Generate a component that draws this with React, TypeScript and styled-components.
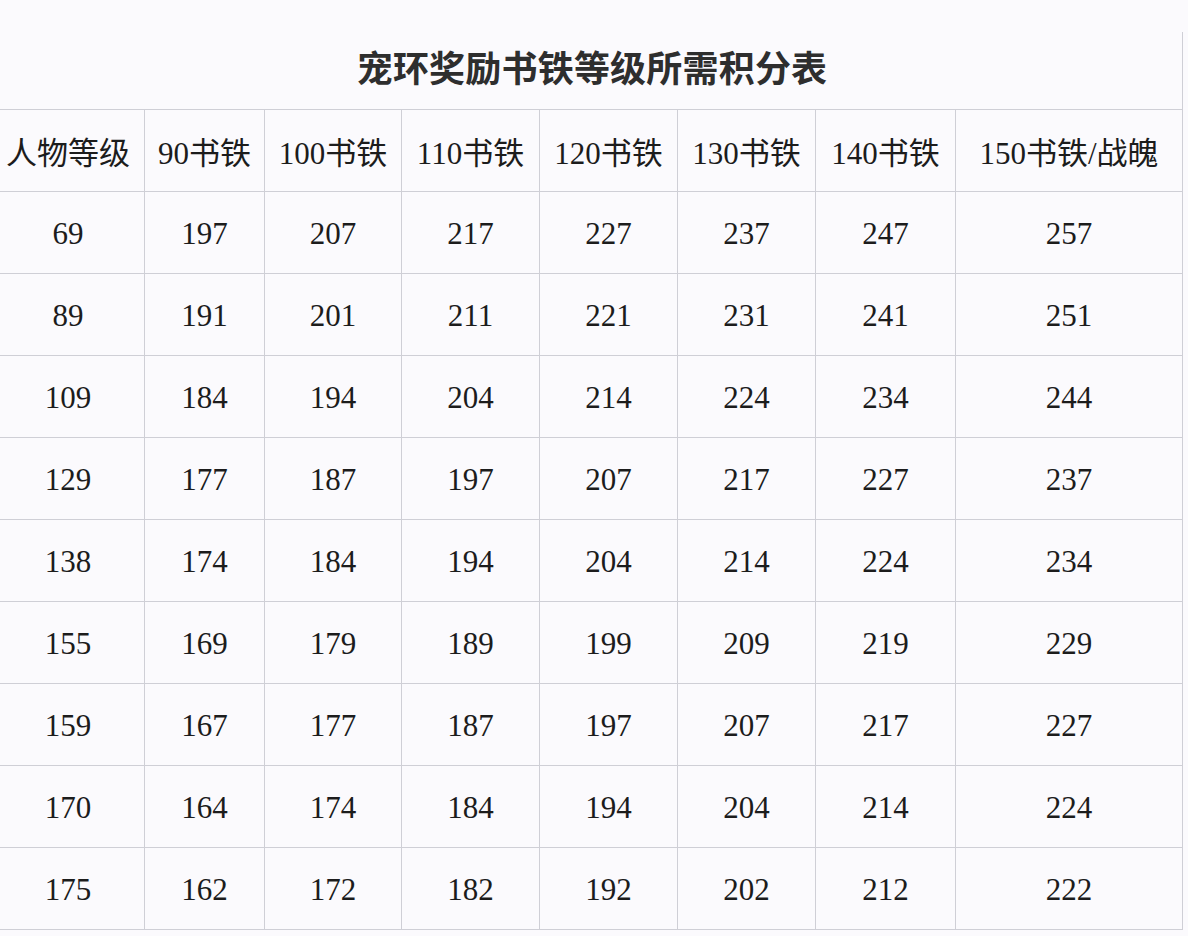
import React from "react";
import styled, { createGlobalStyle } from "styled-components";

const GlobalStyle = createGlobalStyle`
  html, body {
    margin: 0;
    padding: 0;
    background: #fbfafd;
  }
  * { box-sizing: border-box; }
`;

const Page = styled.div`
  width: 1188px;
  height: 936px;
  overflow: hidden;
  background: #fbfafd;
`;

const Sheet = styled.div`
  width: 1191px;
  margin-left: -8px;
`;

const TitleBox = styled.div`
  margin-top: 32px;
  height: 77px;
  border-right: 1px solid #cfcfd6;
  display: flex;
  align-items: center;
  justify-content: center;
  padding-left: 10px;
  padding-bottom: 10px;
`;

const Title = styled.h1`
  margin: 0;
  font-family: "Noto Sans CJK SC", "Noto Sans", sans-serif;
  font-weight: 700;
  font-size: 36px;
  letter-spacing: 0.2px;
  color: #2e2e2e;
  line-height: 1;
`;

const Grid = styled.div`
  display: grid;
  grid-template-columns: 153px 120px 137px 138px 138px 138px 140px 227px;
  grid-auto-rows: 82px;
  border-top: 1px solid #cfcfd6;
`;

const Cell = styled.div`
  display: flex;
  align-items: center;
  justify-content: center;
  border-bottom: 1px solid #cfcfd6;
  border-right: 1px solid #cfcfd6;
  font-family: "Liberation Serif", "Noto Sans CJK SC", serif;
  font-size: 31px;
  color: #1c1c1c;
  white-space: nowrap;
  padding-top: 2px;
`;

const HeadCell = styled(Cell)`
  padding-top: 0;
`;

const headers = [
  "人物等级",
  "90书铁",
  "100书铁",
  "110书铁",
  "120书铁",
  "130书铁",
  "140书铁",
  "150书铁/战魄",
];

const rows: number[][] = [
  [69, 197, 207, 217, 227, 237, 247, 257],
  [89, 191, 201, 211, 221, 231, 241, 251],
  [109, 184, 194, 204, 214, 224, 234, 244],
  [129, 177, 187, 197, 207, 217, 227, 237],
  [138, 174, 184, 194, 204, 214, 224, 234],
  [155, 169, 179, 189, 199, 209, 219, 229],
  [159, 167, 177, 187, 197, 207, 217, 227],
  [170, 164, 174, 184, 194, 204, 214, 224],
  [175, 162, 172, 182, 192, 202, 212, 222],
];

export default function App() {
  return (
    <Page>
      <GlobalStyle />
      <Sheet>
        <TitleBox>
          <Title>宠环奖励书铁等级所需积分表</Title>
        </TitleBox>
        <Grid>
          {headers.map((h) => (
            <HeadCell key={h}>{h}</HeadCell>
          ))}
          {rows.map((r, i) =>
            r.map((v, j) => <Cell key={`${i}-${j}`}>{v}</Cell>)
          )}
        </Grid>
      </Sheet>
    </Page>
  );
}
